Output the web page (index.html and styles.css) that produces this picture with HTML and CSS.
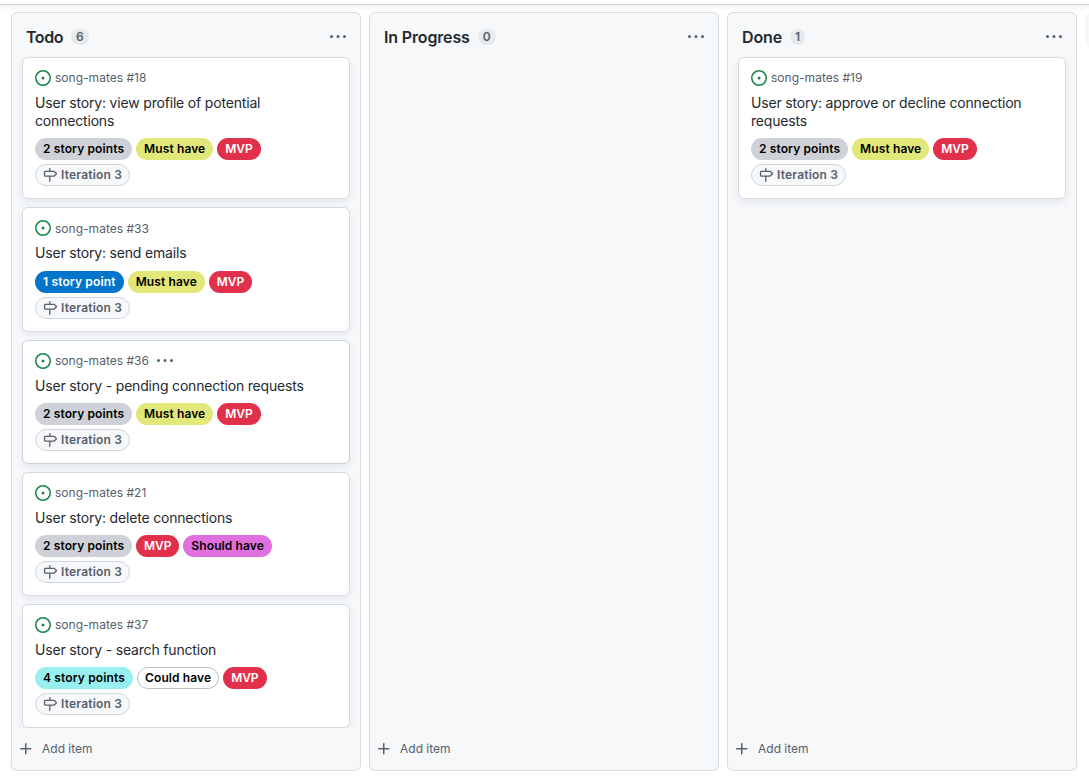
FILE: index.html
```html
<!DOCTYPE html>
<html lang="en">
<head>
<meta charset="utf-8">
<title>Project board</title>
<link rel="stylesheet" href="styles.css">
</head>
<body>
<svg class="sprite" aria-hidden="true">
  <symbol id="open" viewBox="0 0 16 16"><path d="M8 9.5a1.5 1.5 0 1 0 0-3 1.5 1.5 0 0 0 0 3Z"/><path d="M8 0a8 8 0 1 1 0 16A8 8 0 0 1 8 0ZM1.5 8a6.5 6.5 0 1 0 13 0 6.5 6.5 0 0 0-13 0Z"/></symbol>
  <symbol id="dots" viewBox="0 0 16 16"><path d="M8 9a1.5 1.5 0 1 0 0-3 1.5 1.5 0 0 0 0 3ZM1.5 9a1.5 1.5 0 1 0 0-3 1.5 1.5 0 0 0 0 3Zm13 0a1.5 1.5 0 1 0 0-3 1.5 1.5 0 0 0 0 3Z"/></symbol>
  <symbol id="plus" viewBox="0 0 16 16"><path d="M7.75 2a.75.75 0 0 1 .75.75V7h4.25a.75.75 0 0 1 0 1.5H8.5v4.25a.75.75 0 0 1-1.5 0V8.5H2.75a.75.75 0 0 1 0-1.5H7V2.75A.75.75 0 0 1 7.75 2Z"/></symbol>
  <symbol id="milestone" viewBox="0 0 16 16"><path d="M7.75 0a.75.75 0 0 1 .75.75V3h3.634c.414 0 .814.147 1.13.414l2.07 1.75a1.75 1.75 0 0 1 0 2.672l-2.07 1.75a1.75 1.75 0 0 1-1.13.414H8.5v5.25a.75.75 0 0 1-1.5 0V10H2.75A1.75 1.75 0 0 1 1 8.25v-3.5C1 3.784 1.784 3 2.75 3H7V.75A.75.75 0 0 1 7.75 0Zm4.384 8.5a.25.25 0 0 0 .161-.06l2.07-1.75a.248.248 0 0 0 0-.38l-2.07-1.75a.25.25 0 0 0-.161-.06H2.75a.25.25 0 0 0-.25.25v3.5c0 .138.112.25.25.25h9.384Z"/></symbol>
</svg>
<div class="topbar"></div>
<main class="board">
  <section class="column">
    <header class="column-head"><h2 class="tight">Todo</h2><span class="count">6</span><svg class="menu"><use href="#dots"/></svg></header>
    <div class="cards">
      <article class="card">
        <div class="ref"><svg class="open"><use href="#open"/></svg><span>song-mates #18</span></div>
        <h3>User story: view profile of potential connections</h3>
        <div class="labels"><span class="label gray">2 story points</span><span class="label lime">Must have</span><span class="label red">MVP</span></div>
        <div class="labels"><span class="label iteration"><svg><use href="#milestone"/></svg>Iteration 3</span></div>
      </article>
      <article class="card">
        <div class="ref"><svg class="open"><use href="#open"/></svg><span>song-mates #33</span></div>
        <h3>User story: send emails</h3>
        <div class="labels"><span class="label blue">1 story point</span><span class="label lime">Must have</span><span class="label red">MVP</span></div>
        <div class="labels"><span class="label iteration"><svg><use href="#milestone"/></svg>Iteration 3</span></div>
      </article>
      <article class="card hovered">
        <div class="ref"><svg class="open"><use href="#open"/></svg><span>song-mates #36</span><svg class="card-menu"><use href="#dots"/></svg></div>
        <h3>User story - pending connection requests</h3>
        <div class="labels"><span class="label gray">2 story points</span><span class="label lime">Must have</span><span class="label red">MVP</span></div>
        <div class="labels"><span class="label iteration"><svg><use href="#milestone"/></svg>Iteration 3</span></div>
      </article>
      <article class="card">
        <div class="ref"><svg class="open"><use href="#open"/></svg><span>song-mates #21</span></div>
        <h3>User story: delete connections</h3>
        <div class="labels"><span class="label gray">2 story points</span><span class="label red">MVP</span><span class="label pink">Should have</span></div>
        <div class="labels"><span class="label iteration"><svg><use href="#milestone"/></svg>Iteration 3</span></div>
      </article>
      <article class="card">
        <div class="ref"><svg class="open"><use href="#open"/></svg><span>song-mates #37</span></div>
        <h3>User story - search function</h3>
        <div class="labels"><span class="label cyan">4 story points</span><span class="label white">Could have</span><span class="label red">MVP</span></div>
        <div class="labels"><span class="label iteration"><svg><use href="#milestone"/></svg>Iteration 3</span></div>
      </article>
    </div>
    <footer class="add"><svg><use href="#plus"/></svg><span>Add item</span></footer>
  </section>
  <section class="column">
    <header class="column-head"><h2>In Progress</h2><span class="count">0</span><svg class="menu"><use href="#dots"/></svg></header>
    <div class="cards"></div>
    <footer class="add"><svg><use href="#plus"/></svg><span>Add item</span></footer>
  </section>
  <section class="column">
    <header class="column-head"><h2>Done</h2><span class="count">1</span><svg class="menu"><use href="#dots"/></svg></header>
    <div class="cards">
      <article class="card">
        <div class="ref"><svg class="open"><use href="#open"/></svg><span>song-mates #19</span></div>
        <h3>User story: approve or decline connection requests</h3>
        <div class="labels"><span class="label gray">2 story points</span><span class="label lime">Must have</span><span class="label red">MVP</span></div>
        <div class="labels"><span class="label iteration"><svg><use href="#milestone"/></svg>Iteration 3</span></div>
      </article>
    </div>
    <footer class="add"><svg><use href="#plus"/></svg><span>Add item</span></footer>
  </section>
  <div class="new-column"></div>
</main>
</body>
</html>
```
FILE: styles.css
```css
* { box-sizing: border-box; }
body {
  margin: 0;
  height: 778px;
  overflow: hidden;
  background: #fff;
  color: #24292f;
  font-family: Inter, "Liberation Sans", sans-serif;
  display: flex;
  flex-direction: column;
}
svg { display: block; flex: none; fill: currentColor; }
.sprite { display: none; }
.topbar { height: 5px; flex: none; border-bottom: 1px solid #d0d7de; }
.board {
  flex: 1;
  display: flex;
  gap: 8px;
  padding: 7px 0 7px 11px;
  background: linear-gradient(#f3f4f5, #fff 7px);
}
.column {
  width: 350px;
  flex: none;
  display: flex;
  flex-direction: column;
  border: 1px solid #d5dbe2;
  border-radius: 6px;
  background: #f6f8fa;
}
.column-head {
  height: 44px;
  flex: none;
  display: flex;
  align-items: center;
  padding: 4px 14px 0;
}
h2 { margin: 0; font-size: 16px; font-weight: 600; line-height: 24px; letter-spacing: -0.15px; }
h2.tight { letter-spacing: -0.45px; }
.count {
  height: 16px;
  margin-left: 8px;
  padding: 0 5px;
  border-radius: 8px;
  background: #e7eaed;
  color: #57606a;
  font-size: 12px;
  font-weight: 600;
  line-height: 16px;
}
.menu { width: 16px; height: 16px; margin-left: auto; color: #57606a; }
.cards { flex: 1; display: flex; flex-direction: column; gap: 8px; padding: 0 10px; overflow: hidden; }
.card {
  flex: none;
  padding: 12px;
  border: 1px solid #d5dbe2;
  border-radius: 6px;
  background: #fff;
  box-shadow: 0 3px 6px rgba(140, 149, 159, 0.15);
}
.hovered { border-color: #cbd2d9; }
.ref {
  height: 16px;
  display: flex;
  align-items: center;
  gap: 4px;
  color: #57606a;
  font-size: 12px;
  letter-spacing: 0.02px;
}
.ref span { padding-bottom: 0.6px; }
.open { width: 16px; height: 16px; color: #168546; }
.card-menu { width: 16px; height: 16px; margin-left: 4px; }
h3 { margin: 8px 0; font-size: 14px; font-weight: 400; line-height: 18.2px; letter-spacing: -0.18px; }
.labels { display: flex; gap: 4px; }
.labels + .labels { margin-top: 4px; }
.label {
  height: 22px;
  padding: 0 7px;
  border: 1px solid transparent;
  border-radius: 11px;
  font-size: 12px;
  font-weight: 600;
  line-height: 20px;
  color: #000;
  letter-spacing: 0.11px;
}
.gray { background: #ced2d8; }
.lime { background: #e1e779; }
.red { background: #e1304c; color: #fff; letter-spacing: -0.1px; }
.blue { background: #0075ca; color: #fff; letter-spacing: 0.15px; }
.pink { background: #e070de; }
.cyan { background: #97f0ef; letter-spacing: 0.14px; }
.white { background: #fff; border-color: #bfbfbf; }
.iteration {
  display: flex;
  align-items: center;
  gap: 4px;
  background: #f6f8fa;
  border-color: #d0d7de;
  color: #57606a;
  letter-spacing: 0.2px;
}
.iteration svg { width: 14px; height: 14px; }
.add {
  height: 42px;
  flex: none;
  display: flex;
  align-items: center;
  gap: 8px;
  padding: 0 6px 1px;
  color: #57606a;
  font-size: 12px;
}
.add span { padding-bottom: 1px; }
.add svg { width: 16px; height: 16px; }
.new-column { width: 36px; height: 36px; flex: none; border-radius: 6px; background: #f8f8f9; }
```
